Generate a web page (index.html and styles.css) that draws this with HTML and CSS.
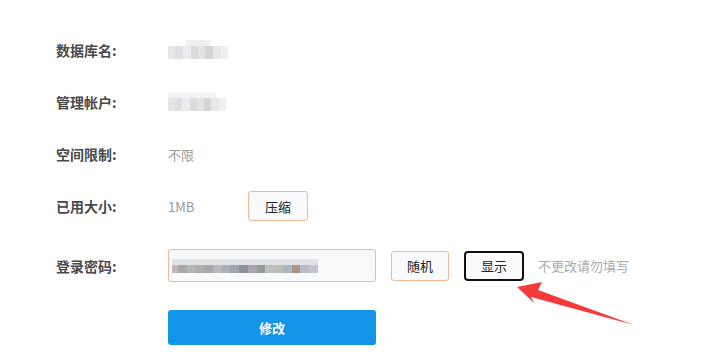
FILE: index.html
```html
<!DOCTYPE html>
<html lang="zh-CN">
  <head>
    <meta charset="UTF-8" />
    <meta name="viewport" content="width=device-width, initial-scale=1.0" />
    <title>数据库设置</title>
    <link rel="stylesheet" href="styles.css">
  </head>
  <body>
    <div class="panel">
      <div class="row">
        <span class="label">数据库名:</span>
        <span class="mosaic mosaic-name"></span>
      </div>
      <div class="row">
        <span class="label">管理帐户:</span>
        <span class="mosaic mosaic-user"></span>
      </div>
      <div class="row">
        <span class="label">空间限制:</span>
        <span class="value">不限</span>
      </div>
      <div class="row">
        <span class="label">已用大小:</span>
        <span class="value size">1MB</span>
        <button class="btn">压缩</button>
      </div>
      <div class="row row-pass">
        <span class="label">登录密码:</span>
        <div class="pass-input"><span class="mosaic mosaic-pass"></span></div>
        <button class="btn btn-random">随机</button>
        <button class="btn btn-show">显示</button>
        <span class="hint">不更改请勿填写</span>
      </div>
      <div class="row-submit">
        <button class="btn-submit">修改</button>
      </div>

      <svg class="arrow" width="728" height="364" viewBox="0 0 728 364">
        <polygon points="517,287 542,282 538,290 634,325 531,297 534,303" fill="#f43a3a" />
      </svg>
    </div>
  </body>
</html>
```

FILE: styles.css
```css
body {
  margin: 0;
  font-family: "Noto Sans CJK SC", "Noto Sans", sans-serif;
  font-size: 13px;
  background: #fff;
}
.panel {
  position: relative;
  height: 364px;
  padding: 24px 0 0 56px;
  box-sizing: border-box;
}
.row {
  display: flex;
  align-items: center;
  height: 52px;
}
.label {
  width: 112px;
  font-size: 14px;
  font-weight: bold;
  color: #4a4a4a;
}
.value {
  color: #999;
}
.size {
  width: 80px;
}
.mosaic {
  display: block;
  position: relative;
  height: 13px;
  filter: blur(0.4px);
  background: linear-gradient(90deg,
    #e6e6e6 0 12%, #dcdfe3 12% 25%, #ececec 25% 38%, #d9dbdf 38% 50%,
    #e3e3e3 50% 62%, #d5d5d5 62% 75%, #e8e8e8 75% 88%, #eef0f3 88% 100%);
}
.mosaic-name {
  width: 60px;
  margin-top: 5px;
}
.mosaic-name::before {
  content: "";
  position: absolute;
  left: 18px;
  top: -6px;
  width: 24px;
  height: 6px;
  background: #f0f0f0;
}
.mosaic-user {
  width: 58px;
  margin-top: 4px;
}
.mosaic-user::before {
  content: "";
  position: absolute;
  left: 0;
  top: -5px;
  width: 48px;
  height: 5px;
  background: #f2f2f2;
}
.btn {
  width: 60px;
  height: 30px;
  border: 1px solid #f3b994;
  border-radius: 3px;
  background: #f8fafc;
  color: #222;
  font-family: inherit;
  font-size: 13px;
  padding: 0;
}
.row-pass {
  height: 33px;
  margin-top: 17px;
}
.pass-input {
  width: 208px;
  height: 33px;
  box-sizing: border-box;
  border: 1px solid #f3b994;
  border-radius: 3px;
  background: #f7f9fb;
  display: flex;
  align-items: center;
  padding-left: 3px;
}
.mosaic-pass {
  width: 146px;
  height: 8px;
  background: linear-gradient(90deg,
    #c9b5b5 0 4%, #a9a9ab 4% 10%, #b2b7b2 10% 16%, #aeaeb2 16% 22%,
    #a6a8ab 22% 28%, #b9bab5 28% 34%, #a7b2b9 34% 40%, #9ea7ac 40% 46%,
    #8d9298 46% 52%, #aba5b0 52% 58%, #959d9b 58% 64%, #bfc1bd 64% 70%,
    #b7bfb7 70% 76%, #a7b8c3 76% 82%, #a89485 82% 88%, #b9bcc0 88% 94%, #c3c6ca 94% 100%);
  box-shadow: 0 -6px 0 0 #dfe3e6;
  margin-top: 6px;
}
.btn-random {
  width: 58px;
  margin-left: 15px;
}
.btn-show {
  margin-left: 15px;
  border: 2px solid #111;
  border-radius: 4px;
}
.hint {
  margin-left: 14px;
  color: #aaa;
}
.row-submit {
  margin: 28px 0 0 112px;
}
.btn-submit {
  width: 208px;
  height: 35px;
  border: none;
  border-radius: 3px;
  background: #1294e9;
  color: #fff;
  font-family: inherit;
  font-size: 13px;
  font-weight: bold;
}
.arrow {
  position: absolute;
  left: 0;
  top: 0;
  pointer-events: none;
}
```
